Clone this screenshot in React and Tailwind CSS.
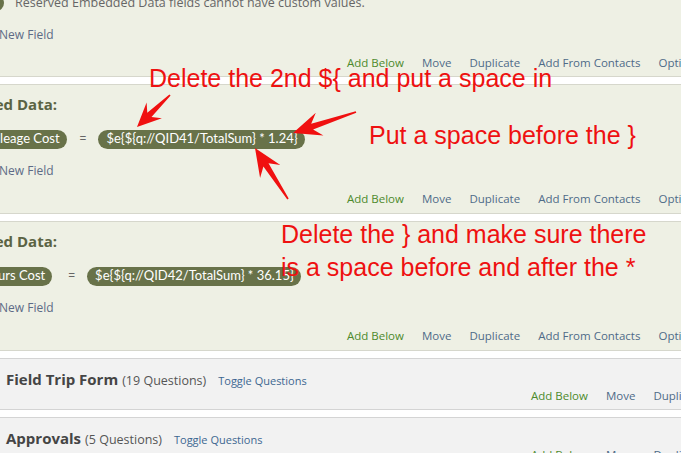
import React from "react";

// Arrow polygon from tail to tip, tapered shaft with a swept-back head.
function arrowPoints([tx, ty], [px, py], headLen = 20, headW = 10, shaftW = 3) {
  const dx = px - tx;
  const dy = py - ty;
  const len = Math.hypot(dx, dy);
  const ux = dx / len;
  const uy = dy / len;
  const nx = -uy;
  const ny = ux;
  const neckX = px - ux * headLen * 0.72;
  const neckY = py - uy * headLen * 0.72;
  const barbX = px - ux * headLen;
  const barbY = py - uy * headLen;
  const pts = [
    [tx + nx * 0.8, ty + ny * 0.8],
    [neckX + nx * shaftW, neckY + ny * shaftW],
    [barbX + nx * headW, barbY + ny * headW],
    [px, py],
    [barbX - nx * headW, barbY - ny * headW],
    [neckX - nx * shaftW, neckY - ny * shaftW],
    [tx - nx * 0.8, ty - ny * 0.8],
  ];
  return pts.map((p) => p.map((v) => v.toFixed(1)).join(",")).join(" ");
}

function Actions() {
  return (
    <div className="flex items-center h-[14px] gap-[18px] pl-[347px] text-[11.5px] text-[#4f6b88] whitespace-nowrap">
      <span className="text-[#4d8a2c]">Add Below</span>
      <span>Move</span>
      <span>Duplicate</span>
      <span>Add From Contacts</span>
      <span>Options</span>
    </div>
  );
}

function NewField() {
  return (
    <div className="-ml-[22px] flex items-center h-[20px] text-[12px] text-[#5d6b86]">
      <span className="w-[21px]">+</span>
      New Field
    </div>
  );
}

function Pill({ children, className = "" }) {
  return (
    <span
      className={`inline-flex items-center h-[19px] pl-[8px] pr-[7px] rounded-full bg-[#687249] text-white text-[13px] font-['Lato',sans-serif] whitespace-nowrap ${className}`}
    >
      {children}
    </span>
  );
}

function EmbeddedPanel({ children, rowClass }) {
  return (
    <div className="h-[130px] bg-[#eef0e4] border-y border-[#d6d7cc] flex flex-col">
      <div className="h-[9px] shrink-0" />
      <div className="w-[200px] -ml-[143px] h-[20px] leading-[20px] text-right text-[15px] font-bold text-[#5b6343] whitespace-nowrap">
        Set Embedded Data:
      </div>
      <div className="h-[15px] shrink-0" />
      <div className={`h-[20px] flex items-center ${rowClass}`}>{children}</div>
      <div className="h-[12px] shrink-0" />
      <NewField />
      <div className="h-[11px] shrink-0" />
      <Actions />
    </div>
  );
}

function BlockPanel({ title, count }) {
  return (
    <div className="h-[52px] bg-[#f2f2f2] border-y border-[#d4d4d4] flex flex-col">
      <div className="flex items-baseline pl-[6px] pt-[9px] h-[27px] whitespace-nowrap">
        <span className="text-[15px] font-bold text-[#454545]">{title}</span>
        <span className="ml-[4px] text-[12.5px] text-[#555]">({count} Questions)</span>
        <span className="ml-[12px] text-[11px] text-[#3d6791]">Toggle Questions</span>
      </div>
      <div className="pl-[531px] pt-[1px] flex gap-[18px] text-[11.5px] text-[#4f6b88] whitespace-nowrap">
        <span className="text-[#4d8a2c]">Add Below</span>
        <span>Move</span>
        <span>Duplicate</span>
      </div>
    </div>
  );
}

export default function App() {
  return (
    <div className="relative w-[681px] h-[453px] overflow-hidden bg-white font-['Open_Sans',sans-serif]">
      <div className="flex flex-col gap-[7px] -mt-[53px]">
        {/* First embedded data element, mostly scrolled off */}
        <div className="h-[130px] bg-[#eef0e4] border-b border-[#d6d7cc] flex flex-col">
          <div className="h-[46px] shrink-0" />
          <div className="flex items-center h-[20px] -ml-[12px] whitespace-nowrap">
            <span className="w-[16px] h-[16px] rounded-full bg-[#687249]" />
            <span className="ml-[11px] text-[12.5px] text-[#666]">
              Reserved Embedded Data fields cannot have custom values.
            </span>
          </div>
          <div className="h-[12px] shrink-0" />
          <NewField />
          <div className="h-[11px] shrink-0" />
          <Actions />
        </div>

        <EmbeddedPanel rowClass="-ml-[23px]">
          <Pill>Mileage Cost</Pill>
          <span className="ml-[13px] text-[12px] text-[#666]">=</span>
          <Pill className="ml-[12px]">{"$e{${q://QID41/TotalSum} * 1.24}"}</Pill>
        </EmbeddedPanel>

        <EmbeddedPanel rowClass="-ml-[27px]">
          <Pill>Hours Cost</Pill>
          <span className="ml-[16px] text-[12px] text-[#666]">=</span>
          <Pill className="ml-[12px]">{"$e{${q://QID42/TotalSum} * 36.15}"}</Pill>
        </EmbeddedPanel>

        <BlockPanel title="Field Trip Form" count={19} />
        <BlockPanel title="Approvals" count={5} />
      </div>

      {/* Red annotations laid over the screenshot */}
      <div className="absolute left-[149px] top-[63px] text-[25px] leading-[30px] text-[#ee1111] font-['Liberation_Sans',Arial,sans-serif] whitespace-nowrap">
        {"Delete the 2nd ${ and put a space in"}
      </div>
      <div className="absolute left-[369px] top-[120px] text-[25px] leading-[30px] text-[#ee1111] font-['Liberation_Sans',Arial,sans-serif] whitespace-nowrap">
        {"Put a space before the }"}
      </div>
      <div className="absolute left-[281px] top-[218px] text-[25px] leading-[33px] text-[#ee1111] font-['Liberation_Sans',Arial,sans-serif] whitespace-nowrap">
        <div>{"Delete the } and make sure there"}</div>
        <div>{"is a space before and after the *"}</div>
      </div>
      <svg className="absolute inset-0" width="681" height="453" viewBox="0 0 681 453">
        <polygon fill="#f01010" points={arrowPoints([170, 95], [137, 127], 24, 11, 3)} />
        <polygon fill="#f01010" points={arrowPoints([356, 112], [293, 133], 28, 12, 3)} />
        <polygon fill="#f01010" points={arrowPoints([288, 199], [255, 148], 28, 12, 3)} />
      </svg>
    </div>
  );
}
